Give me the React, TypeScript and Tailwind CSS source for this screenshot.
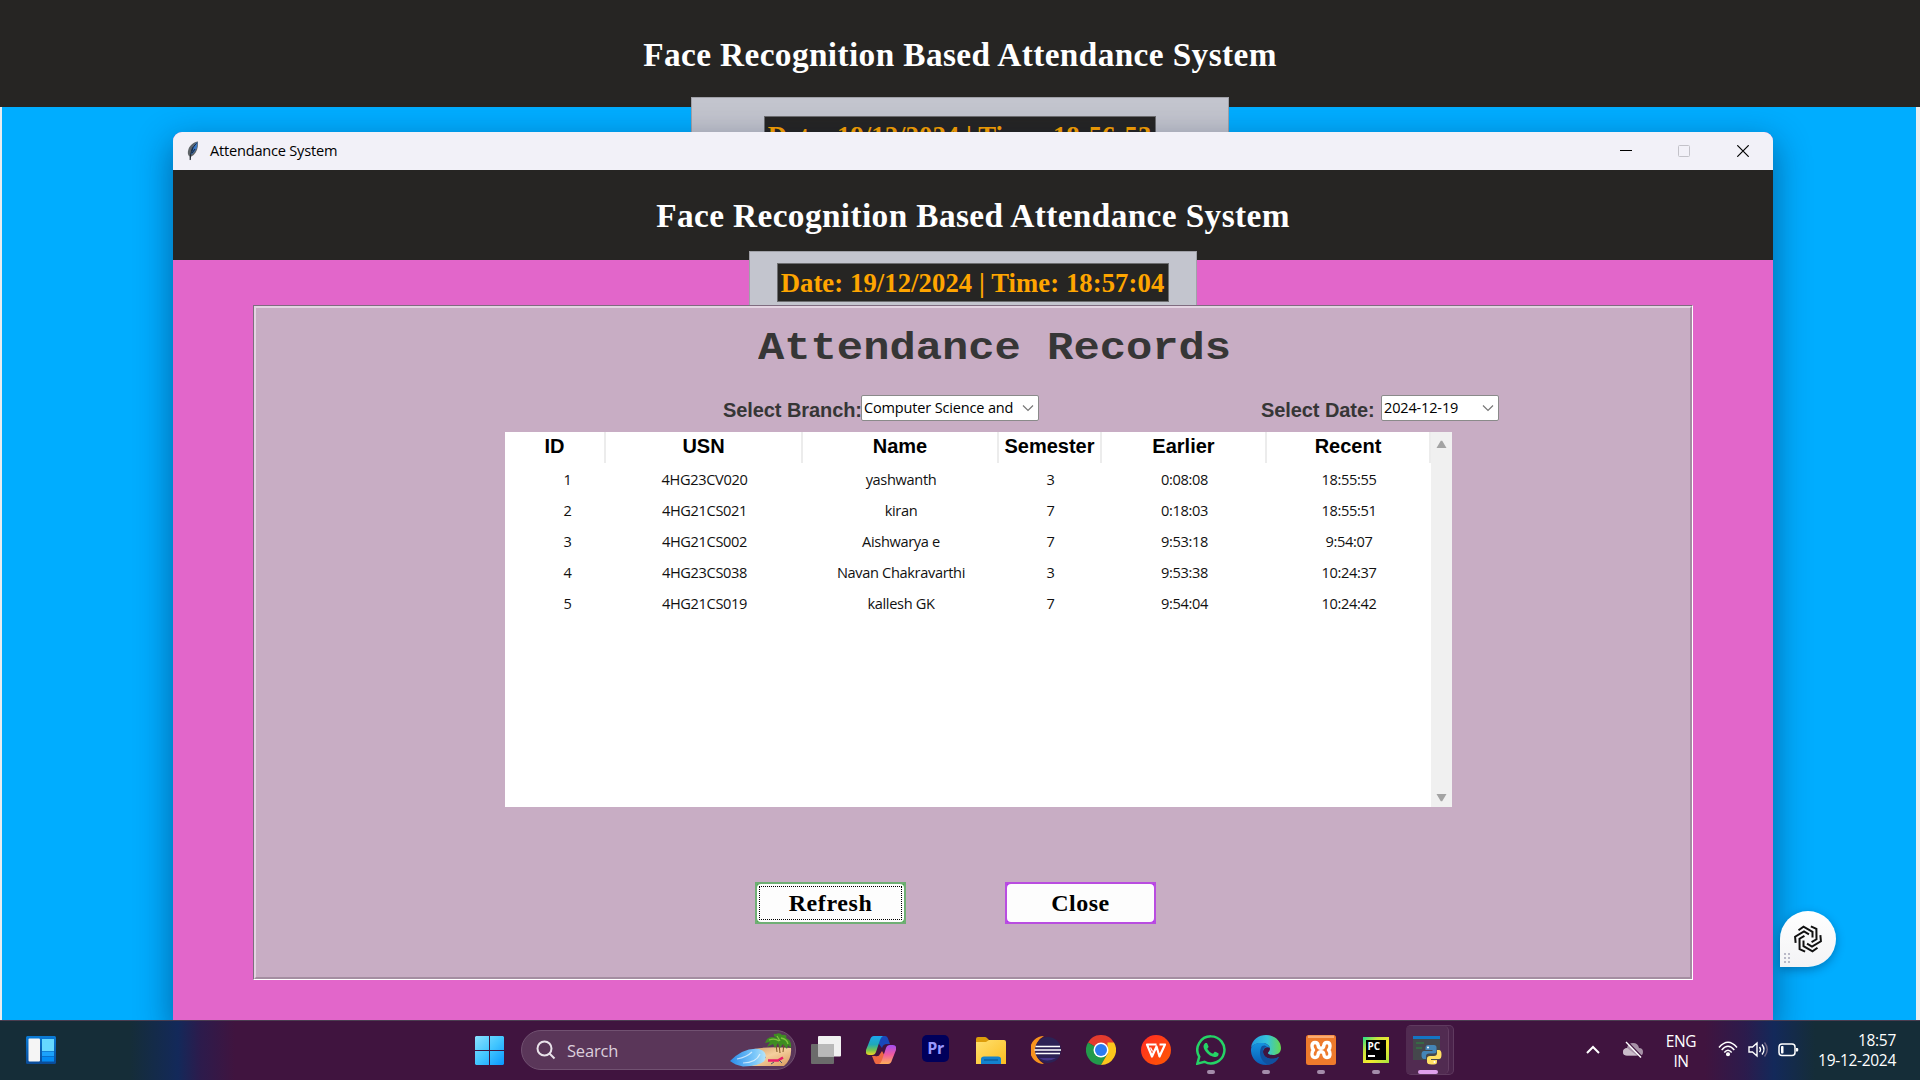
import React from "react";

const columns = [
  { label: "ID", width: "w-[101px]", cell: "pl-[24px]" },
  { label: "USN", width: "w-[197px]", cell: "" },
  { label: "Name", width: "w-[196px]", cell: "" },
  { label: "Semester", width: "w-[103px]", cell: "" },
  { label: "Earlier", width: "w-[165px]", cell: "" },
  { label: "Recent", width: "w-[164px]", cell: "" },
];

const rows = [
  ["1", "4HG23CV020", "yashwanth", "3", "0:08:08", "18:55:55"],
  ["2", "4HG21CS021", "kiran", "7", "0:18:03", "18:55:51"],
  ["3", "4HG21CS002", "Aishwarya e", "7", "9:53:18", "9:54:07"],
  ["4", "4HG23CS038", "Navan Chakravarthi", "3", "9:53:38", "10:24:37"],
  ["5", "4HG21CS019", "kallesh GK", "7", "9:54:04", "10:24:42"],
];

function Heading() {
  return (
    <h1 className="whitespace-nowrap font-['Liberation_Serif',serif] text-[33.33px] font-bold leading-[39px] tracking-[0.38px] text-white">
      Face Recognition Based Attendance System
    </h1>
  );
}

function Clock({ time }: { time: string }) {
  return (
    <div className="flex h-[39px] w-[392px] items-center justify-center whitespace-nowrap border border-[#6d6e70] bg-[#262523] pt-px font-['Liberation_Serif',serif] text-[26.67px] font-bold leading-[37px] tracking-[0.08px] text-[#ffa500]">
      Date: 19/12/2024 | Time: {time}
    </div>
  );
}

function Combo({ text, width }: { text: string; width: string }) {
  return (
    <div className={`flex h-[26px] items-center justify-between rounded-[2px] border border-[#8a8a8a] bg-white pl-[2px] pr-[4px] font-['Open_Sans',sans-serif] text-[14.5px] font-normal tracking-[-0.15px] text-black ${width}`}>
      <span className="whitespace-nowrap leading-[24px]">{text}</span>
      <svg width="12" height="8" viewBox="0 0 12 8" fill="none" stroke="#777" strokeWidth="1.2">
        <path d="M1 1.5l5 5 5-5" />
      </svg>
    </div>
  );
}

function TitleBar() {
  return (
    <div className="flex h-[38px] items-center rounded-t-[9px] bg-[#f2f1f8] pl-[14px]">
      <svg width="12" height="20" viewBox="0 0 12 20">
        <path d="M11 .5C7 1 3 4 1.500 8 .3 11.500.7 14 2.500 15.500L3 19.500l1-3.700c4-2 6.200-6 6.800-10z" fill="#5f6468" />
        <path d="M10.500 1C7 3 4 7 3.500 14c3.500-2 6-5 6.500-8.500z" fill="#3a78c8" />
        <path d="M9.500 2.500C6 5.500 3.500 10 3.200 19" fill="none" stroke="#18222c" strokeWidth="1" />
        <path d="M5.800 6.500l-1 3.500M8 8l-3 4" stroke="#172b45" strokeWidth="1.200" />
      </svg>
      <span className="ml-[11px] flex-1 pb-[2px] font-['Open_Sans',sans-serif] text-[14.6px] leading-[36px] tracking-[-0.22px] text-black">Attendance System</span>
      <svg className="mr-[46px]" width="12" height="12" viewBox="0 0 12 12"><path d="M0 5.500h12" stroke="#000" /></svg>
      <svg className="mr-[47px]" width="12" height="12" viewBox="0 0 12 12"><rect x=".5" y=".5" width="11" height="11" rx="1" fill="none" stroke="#c3c2c9" /></svg>
      <svg className="mr-[24px]" width="12" height="12" viewBox="0 0 12 12"><path d="M.3.3l11.400 11.400M11.700.3L.3 11.700" stroke="#000" strokeWidth="1.200" /></svg>
    </div>
  );
}

function RecordsTable() {
  return (
    <div className="ml-[249px] flex h-[375px] w-[947px] bg-white">
      <div className="w-[926px]">
        <div className="flex h-[31px]">
          {columns.map((c) => (
            <div key={c.label} className={`flex justify-center border-r-2 border-[#ececec] font-['Liberation_Sans',sans-serif] text-[20px] font-bold leading-[29px] text-black ${c.width}`}>
              {c.label}
            </div>
          ))}
        </div>
        {rows.map((r) => (
          <div key={r[0]} className="flex h-[31.2px] items-center">
            {r.map((v, i) => (
              <div key={i} className={`whitespace-nowrap text-center font-['Open_Sans',sans-serif] text-[14.6px] leading-[30px] tracking-[-0.35px] text-[#111] ${columns[i].width} ${columns[i].cell}`}>
                {v}
              </div>
            ))}
          </div>
        ))}
      </div>
      <div className="flex w-[21px] flex-col items-center justify-between bg-[#f0f0f0] pb-[5px] pt-[8px]">
        <svg width="11" height="9" viewBox="0 0 11 9"><path d="M4.800.8h1.400L10.500 8H.5z" fill="#a3a3a3" /></svg>
        <svg width="11" height="9" viewBox="0 0 11 9"><path d="M.5 1h10L6.200 8.200H4.800z" fill="#a3a3a3" /></svg>
      </div>
    </div>
  );
}

function AttendanceWindow() {
  return (
    <div className="absolute left-[173px] top-[132px] h-[888px] w-[1600px] rounded-t-[9px] bg-[#e266ca] shadow-[0_12px_34px_3px_rgba(0,20,60,0.42)]">
      <TitleBar />
      <div className="flex h-[90px] justify-center bg-[#262523] pt-[26px]">
        <Heading />
      </div>
      <div className="relative mx-auto -mt-[9px] flex h-[54px] w-[448px] justify-center border border-b-0 border-[#a0a1a8] bg-[#c3c5ce] pr-px pt-[11px]">
        <Clock time="18:57:04" />
      </div>
      <div className="ml-[80px] h-[675px] w-[1440px] border border-b-white border-l-[#7f6c80] border-r-white border-t-[#7f6c80]">
        <div className="h-full border-2 border-b-[#a48da1] border-l-[#e4d4e2] border-r-[#a48da1] border-t-[#e4d4e2] bg-[#c8adc4]">
          <h2 className="h-[87px] whitespace-nowrap pl-[502px] pt-[16px] font-['Liberation_Mono',monospace] text-[43.8px] font-bold leading-[48px] text-[#363636]">
            <span className="inline-block origin-[50%_78%] scale-y-[0.88]">Attendance Records</span>
          </h2>
          <div className="flex h-[37px] font-['Liberation_Sans',sans-serif] text-[20px] font-bold leading-[30px] tracking-[-0.08px] text-[#363636]">
            <span className="w-[138px] whitespace-nowrap ml-[467px]">Select Branch:</span>
            <Combo text="Computer Science and" width="w-[178px]" />
            <span className="ml-[222px] w-[120px] whitespace-nowrap">Select Date:</span>
            <Combo text="2024-12-19" width="w-[118px]" />
          </div>
          <RecordsTable />
          <div className="ml-[499px] mt-[75px] flex gap-[99px] font-['Liberation_Serif',serif] text-[24px] font-bold text-black">
            <button className="h-[42px] w-[151px] border-2 border-[#6fae74] bg-[#4caf50]">
              <span className="flex h-full items-center justify-center rounded-[4px] bg-[#fdfdfd] p-[2px]">
                <span className="h-full w-full border border-dotted border-black leading-[33px] tracking-[0.6px]">Refresh</span>
              </span>
            </button>
            <button className="h-[42px] w-[151px] border-2 border-[#b94de0] bg-[#b526f5]">
              <span className="flex h-full items-center justify-center rounded-[4px] bg-[#fdfdfd] leading-[36px] tracking-[0.5px]">Close</span>
            </button>
          </div>
        </div>
      </div>
    </div>
  );
}

function AssistantBubble() {
  return (
    <div className="absolute left-[1780px] top-[911px] flex size-[56px] items-center justify-center rounded-full rounded-bl-[3px] bg-gradient-to-b from-white to-[#f3f3f5] shadow-[0_3px_10px_rgba(0,30,70,0.35)]">
      <svg width="30" height="30" viewBox="-15 -15 30 30" fill="none" stroke="#111" strokeWidth="2">
        {[0, 60, 120, 180, 240, 300].map((a) => (
          <path key={a} transform={`rotate(${a})`} d="M-9.500-8.800L-4.500-12.300 4.500-7.200V-1.500" />
        ))}
      </svg>
      <div className="absolute bottom-[4px] left-[4px] grid grid-cols-2 gap-[2px]">
        {[0, 1, 2, 3, 4, 5].map((i) => (
          <i key={i} className="size-[2px] bg-[#b9b9c8]" />
        ))}
      </div>
    </div>
  );
}

function Widgets() {
  return (
    <svg width="30" height="28" viewBox="0 0 30 28">
      <defs><linearGradient id="wg" x2="0" y2="1"><stop stopColor="#0a7bd6" /><stop offset="1" stopColor="#0a4b98" /></linearGradient></defs>
      <rect width="30" height="28" rx="1.500" fill="url(#wg)" />
      <rect x="2.500" y="2.500" width="11.500" height="23" rx="1" fill="#f5f5f5" />
      <rect x="16" y="3" width="12" height="12" fill="#66d8ff" />
      <rect x="16" y="15.500" width="12" height="4.500" fill="#1ca2fb" />
      <rect x="16" y="20.500" width="12" height="5" fill="#048bf2" />
    </svg>
  );
}

function Start() {
  return (
    <svg width="29" height="29" viewBox="0 0 29 29">
      <defs><linearGradient id="st" gradientUnits="userSpaceOnUse" x2="29" y2="29"><stop stopColor="#8be0ff" /><stop offset=".5" stopColor="#42c6ff" /><stop offset="1" stopColor="#0a96ff" /></linearGradient></defs>
      <path d="M1 0h13v14H0V1zM15 0h13l1 1v13H15zM0 15h14v14H1l-1-1zM15 15h14v13l-1 1H15z" fill="url(#st)" />
    </svg>
  );
}

function Beach() {
  return (
    <svg width="62" height="34" viewBox="0 0 62 34">
      <defs>
        <linearGradient id="sea" x2="1"><stop stopColor="#2b8de8" /><stop offset=".7" stopColor="#7cc8fa" /><stop offset="1" stopColor="#b7e5f6" /></linearGradient>
        <linearGradient id="sand" x2="1" y2="1"><stop stopColor="#c99463" /><stop offset=".5" stopColor="#f5cf9d" /><stop offset="1" stopColor="#d89a5c" /></linearGradient>
      </defs>
      <path d="M24 16Q40 13 61 15 62 26 54 33H12Q32 33 36 24z" fill="url(#sand)" />
      <path d="M0 28Q14 14 29 16 38 19 35 27 31 33 13 33.500 5 32 0 28z" fill="url(#sea)" />
      <path d="M7 26q10-2 15-7M13 30q13 0 17-9" fill="none" stroke="#fff" strokeOpacity=".65" strokeWidth="1.200" />
      <path d="M47 19l-1-8M50 20l-1-9M53 19l1-9" fill="none" stroke="#7b5522" strokeWidth="1" />
      <path d="M48 6Q42 2 37 6L35 10 40 9 37 14 43 11 45 15 48 10 50 15 53 11 57 16 58 12 61 15Q62 7 56 5 58 1 52 2 50-1 46 1 43 0 44 3z" fill="#3f8d22" />
      <path d="M39 7q6-2 10 1M51 5q6 1 7 6M47 3l3 5" fill="none" stroke="#7fc43d" strokeWidth="1.300" />
      <path d="M38 27.500h10l5-3" fill="none" stroke="#e91e67" strokeWidth="2.600" />
      <path d="M41 31l3-2M52 30l-3-3" stroke="#4d586b" strokeWidth="1" />
    </svg>
  );
}

function TaskView() {
  return (
    <svg width="30" height="28" viewBox="0 0 30 28">
      <rect y="8" width="23" height="20" rx="1" fill="#6b6b6b" />
      <rect x="7" width="23" height="20.500" rx="1" fill="#f1f1f1" />
      <rect x="7" y="8" width="16" height="12.500" fill="#b9b9b9" />
    </svg>
  );
}

function Copilot() {
  return (
    <svg width="30" height="28" viewBox="0 0 30 28">
      <defs>
        <linearGradient id="ca" x2="0" y2="1"><stop stopColor="#1ba7ef" /><stop offset=".45" stopColor="#20a9b8" /><stop offset=".75" stopColor="#77c44c" /><stop offset="1" stopColor="#f4d523" /></linearGradient>
        <linearGradient id="cb" x2="0" y2="1"><stop stopColor="#a34df2" /><stop offset=".5" stopColor="#f05aa0" /><stop offset="1" stopColor="#ffaf58" /></linearGradient>
      </defs>
      <path d="M13 0h6q2.500 0 3.500 4l1.500 4h-3q-4 0-5 4L13 8z" fill="#1948ba" />
      <path d="M8 0h9q-2 1-3 4L10 16q-1 3-4 3H3q-4 0-3-5L4 4q1-4 4-4z" fill="url(#ca)" />
      <path d="M10 28h7l3-6-4-7-2 3q-1 3-5 2H6l2 5q1 3 2 3z" fill="#ed6842" />
      <path d="M22 28h-9q2-1 3-4l4-12q1-3 4-3h3q4 0 3 5l-4 10q-1 4-4 4z" fill="url(#cb)" />
    </svg>
  );
}

function Premiere() {
  return (
    <div className="-mt-[3px] flex size-[27px] items-center justify-center rounded-[5px] bg-[#00005b] font-['Open_Sans',sans-serif] text-[16px] font-bold leading-[24px] tracking-[-0.5px] text-[#9999ff]">
      <span className="-mt-[2px]">Pr</span>
    </div>
  );
}

function Folder() {
  return (
    <svg width="30" height="27" viewBox="0 0 30 27">
      <defs><linearGradient id="fo" x2="1" y2="1"><stop stopColor="#ffe06f" /><stop offset="1" stopColor="#fbbd20" /></linearGradient></defs>
      <path d="M0 2q0-2 2-2h7q1 0 2 1l2 2h15v5H0z" fill="#dd9d0b" />
      <path d="M0 5h10l3-2h15q2 0 2 2v22H0z" fill="url(#fo)" />
      <path d="M5 27v-5q0-2.500 3-2.500h14q3 0 3 2.500v5z" fill="#1382cf" />
      <path d="M8 23h14" stroke="#0a4c87" strokeWidth="1" />
    </svg>
  );
}

function Eclipse() {
  return (
    <svg width="30" height="28" viewBox="0 0 30 28">
      <path d="M13 0A14 14 0 0 0 13 28 16 16 0 0 1 13 0z" fill="#f7941e" />
      <circle cx="17" cy="14" r="13" fill="#2c2255" />
      <path d="M8 22q8 5 17 0z" fill="#46378b" />
      <path d="M4.500 10.500h24.500M3.500 14h26.500M4.500 17.500h24.500" stroke="#fff" strokeWidth="1.700" />
    </svg>
  );
}

function Chrome() {
  return (
    <svg width="30" height="30" viewBox="0 0 30 30">
      <path d="M15 15L2 7.500A15 15 0 0 1 28 7.500z" fill="#e33b2e" />
      <path d="M2 7.500A15 15 0 0 0 15 30L21.500 18.700 15 15z" fill="#229a4b" />
      <path d="M28 7.500A15 15 0 0 1 15 30L21.500 18.700V7.500z" fill="#fcc61c" />
      <circle cx="15" cy="15" r="7.500" fill="#fff" />
      <circle cx="15" cy="15" r="6" fill="#2b7bf1" />
    </svg>
  );
}

function Wps() {
  return (
    <svg width="30" height="30" viewBox="0 0 30 30">
      <defs><linearGradient id="wp" x2="1" y2="1"><stop stopColor="#ff2a25" /><stop offset="1" stopColor="#ff5a00" /></linearGradient></defs>
      <circle cx="15" cy="15" r="15" fill="url(#wp)" />
      <path d="M15.500 9.500H6L11 21.500l4.500-10 3 10L24 9.500h-5.500" fill="none" stroke="#fff" strokeWidth="2.200" strokeLinejoin="round" />
      <path d="M9.500 12.500l2 4" stroke="#fff" strokeWidth="1.200" />
    </svg>
  );
}

function WhatsApp() {
  return (
    <svg width="30" height="30" viewBox="0 0 24 24" fill="#25d366">
      <path d="M17.472 14.382c-.297-.149-1.758-.867-2.030-.967-.273-.099-.471-.148-.670.150-.197.297-.767.966-.940 1.164-.173.199-.347.223-.644.075-.297-.150-1.255-.463-2.390-1.475-.883-.788-1.480-1.761-1.653-2.059-.173-.297-.018-.458.130-.606.134-.133.298-.347.446-.520.149-.174.198-.298.298-.497.099-.198.050-.371-.025-.520-.075-.149-.669-1.612-.916-2.207-.242-.579-.487-.500-.669-.510-.173-.008-.371-.010-.570-.010-.198 0-.520.074-.792.372-.272.297-1.040 1.016-1.040 2.479 0 1.462 1.065 2.875 1.213 3.074.149.198 2.096 3.200 5.077 4.487.709.306 1.262.489 1.694.625.712.227 1.360.195 1.871.118.571-.085 1.758-.719 2.006-1.413.248-.694.248-1.289.173-1.413-.074-.124-.272-.198-.570-.347" />
      <path d="M12 1.100A10.800 10.800 0 0 0 2.600 17.400L1.100 22.900l5.700-1.500A10.800 10.800 0 1 0 12 1.100z" fill="none" stroke="#25d366" strokeWidth="2" />
    </svg>
  );
}

function Edge() {
  return (
    <svg width="30" height="30" viewBox="0 0 30 30">
      <defs>
        <linearGradient id="ea" x2="1"><stop stopColor="#239be0" /><stop offset=".55" stopColor="#36c4db" /><stop offset="1" stopColor="#66d94f" /></linearGradient>
        <linearGradient id="eb" x2="0" y2="1"><stop stopColor="#1594df" /><stop offset="1" stopColor="#0a5bb5" /></linearGradient>
      </defs>
      <path d="M0 13C1 4 8 0 15 0c9 0 15 6 15 13 0 5-4 7-8 7-3 0-5-1-5-2s2-2 2-4c0-3-3-6-8-6C6 8 1 10 0 13z" fill="url(#ea)" />
      <path d="M0 14C1 9 6 7.500 11 8c4 0 7 2 8 5-3-2-7 0-7 4 0 6 8 9 16 5-3 5-8 8-13 8C6 30-.5 23 0 14z" fill="url(#eb)" />
      <path d="M11 11c-4 6-2 15 6 18.800C22 29.500 26 26 28 22c-8 4-15 1-16-5-.2-3 1-5 4-5-1-1.500-3-2-5-1z" fill="#10509f" />
    </svg>
  );
}

function Xampp() {
  return (
    <svg width="30" height="30" viewBox="0 0 30 30">
      <rect width="30" height="30" rx="2.500" fill="#ee7a2c" />
      <path d="M2 .5h26v2.500H2z" fill="#fbab72" />
      <path d="M7.500 15Q6 13.500 6 11q0-3.500 3-3.500t3.200 3.500q.3 2.200 2.800 2.200t2.800-2.200q.2-3.500 3.200-3.500t3 3.500q0 2.500-1.500 4 1.500 1.500 1.500 4 0 3.500-3 3.500t-3.200-3.500q-.3-2.200-2.800-2.200t-2.800 2.200q-.2 3.500-3.200 3.500T6 19q0-2.500 1.500-4z" fill="none" stroke="#fff" strokeWidth="3.400" strokeLinejoin="round" />
    </svg>
  );
}

function PyCharm() {
  return (
    <div className="flex size-[26px] items-center justify-center bg-[linear-gradient(135deg,#21e08c_0%,#c9e53c_30%,#f5e92e_60%,#a5e640_100%)]">
      <div className="flex h-[20px] w-[20px] flex-col items-start bg-black pl-[2px] font-['Open_Sans',sans-serif] text-[10px] font-bold leading-[12px] text-white">
        PC
        <i className="mt-[3px] h-[1.5px] w-[7px] bg-white" />
      </div>
    </div>
  );
}

function PythonWindow() {
  return (
    <svg className="ml-[1px]" width="30" height="30" viewBox="0 0 30 30">
      <rect x="0" y="1" width="27" height="24" fill="#45474c" />
      <rect x="0" y="1" width="27" height="3" fill="#1475c5" />
      <path d="M3 8h8M3 13h6" stroke="#2b8c3e" strokeWidth="1.200" />
      <path d="M18.500 10h-3.500q-2.500 0-2.500 3v2h7v1H11q-2.500 0-2.500 4t2.500 4h2v-3q0-2.500 3-2.500h5q2.500 0 2.500-2.500v-3.500q0-2.500-2.500-2.500z" fill="#4485b7" />
      <path d="M18.500 29.500h2.500q3 0 3-2.500v-2h-6v-1h8q2.500 0 2.500-4.500T26 15h-2v3q0 3-3 3h-4q-3 0-3 2.500V27q0 2.500 4.500 2.500z" fill="#ffe064" />
      <circle cx="15" cy="12.500" r="1" fill="#fff" /><circle cx="21.500" cy="27" r="1" fill="#fff" />
    </svg>
  );
}

const apps = [
  { id: "view", icon: <TaskView />, open: false },
  { id: "copilot", icon: <Copilot />, open: false },
  { id: "premiere", icon: <Premiere />, open: false },
  { id: "files", icon: <Folder />, open: false },
  { id: "eclipse", icon: <Eclipse />, open: false },
  { id: "chrome", icon: <Chrome />, open: false },
  { id: "wps", icon: <Wps />, open: false },
  { id: "whatsapp", icon: <WhatsApp />, open: true },
  { id: "edge", icon: <Edge />, open: true },
  { id: "xampp", icon: <Xampp />, open: true },
  { id: "pycharm", icon: <PyCharm />, open: true },
];

function Taskbar() {
  return (
    <div className="relative flex h-[60px] w-[1920px] items-start border-t border-[#4a3d50] bg-[linear-gradient(90deg,#152d38_0px,#152d38_130px,#13295a_178px,#2c1b4c_200px,#40143f_235px,#40143f_1705px,#2c1b4c_1745px,#13295a_1774px,#152d38_1815px,#152d38_1920px)] font-['Open_Sans',sans-serif] text-white">
      <div className="ml-[26px] mt-[15px]"><Widgets /></div>
      <div className="ml-[419px] mt-[15px]"><Start /></div>
      <div className="ml-[17px] mt-[9px] flex h-[40px] w-[275px] items-center rounded-full border border-[#715171] bg-[#5a3659] pl-[14px] pr-[3px]">
        <svg width="20" height="20" viewBox="0 0 20 20" fill="none" stroke="#e9e2ea" strokeWidth="2"><circle cx="8.500" cy="8.500" r="7" /><path d="M13.500 13.500l5 5" /></svg>
        <span className="ml-[11px] flex-1 pt-[2px] text-[16.500px] leading-[38px] tracking-[-0.2px] text-[#dccfdc]">Search</span>
        <Beach />
      </div>
      <div className="ml-[2px] flex">
        {apps.map((a) => (
          <div key={a.id} className="flex w-[55px] flex-col items-center">
            <div className="flex h-[58px] items-center">{a.icon}</div>
            {a.open && <i className="-mt-[9px] h-[4px] w-[8px] rounded-full bg-[#a48cab]" />}
          </div>
        ))}
      </div>
      <div className="ml-[3px] mt-[4px] flex h-[50px] w-[48px] rounded-[5px] border border-[#5f3a5f] border-l-0 bg-[#4b234b]">
        <div className="flex h-[48px] w-[43px] flex-col items-center rounded-[5px] border-r border-[#643e63] bg-[#512b51] pt-[9px]">
          <PythonWindow />
          <i className="ml-px mt-[5px] h-[4px] w-[20px] shrink-0 rounded-full bg-[#dfa0ec]" />
        </div>
      </div>
      <svg className="ml-[132px] mt-[24px]" width="14" height="9" viewBox="0 0 14 9" fill="none" stroke="#fff" strokeWidth="2"><path d="M1 8l6-6 6 6" /></svg>
      <svg className="ml-[22px] mt-[20px]" width="22" height="18" viewBox="0 0 22 18">
        <path d="M5 14.500Q1 14.500 1 11t4-4q1-5 6-5t6 5q4 0 4 4t-4 3.500z" fill="#a792a7" />
        <path d="M5 14.500Q1 14.500 1 11t4-4l4 3 6 4.500z" fill="#cabdca" />
        <path d="M5.200.4l15 15.500" stroke="#40143f" strokeWidth="1.400" /><path d="M4 1l15 15.500" stroke="#fff" strokeWidth="1.400" />
      </svg>
      <div className="ml-[14px] mt-[10px] w-[46px] text-center text-[15.500px] leading-[20px] tracking-[-0.4px]">ENG<br />IN</div>
      <svg className="ml-[14px] mt-[20px]" width="20" height="16" viewBox="0 0 20 16" fill="none" stroke="#fff" strokeWidth="1.500">
        <path d="M1 6.500Q10-4 19 6.500M3.700 9Q10 1.500 16.300 9M6.300 11.500Q10 7 13.700 11.500" /><circle cx="10" cy="13.300" r="1.300" fill="#fff" />
      </svg>
      <svg className="ml-[10px] mt-[20px]" width="21" height="18" viewBox="0 0 21 18" fill="none" stroke="#fff" strokeWidth="1.400">
        <path d="M1 6h3.500L9 2v13l-4.500-4H1zM11.500 6q2 2.500 0 5M14 3.500q4 5 0 10" /><path d="M16.500 1.500q5.500 7 0 14" stroke="#6d6280" />
      </svg>
      <svg className="ml-[9px] mt-[22px]" width="21" height="14" viewBox="0 0 21 14">
        <rect x="1" y="1" width="16" height="11.500" rx="3" fill="none" stroke="#fff" strokeWidth="1.500" /><rect x="3" y="3" width="2.500" height="7.500" rx=".8" fill="#fff" /><path d="M18 5h1.500q.8 0 .8 1.700t-.8 1.800H18z" fill="#fff" />
      </svg>
      <div className="absolute right-[24px] top-[9px] text-right text-[15.500px] leading-[20px] tracking-[-0.3px]">18:57<br />19-12-2024</div>
    </div>
  );
}

export default function App() {
  return (
    <div className="flex h-[1080px] w-[1920px] flex-col overflow-hidden">
      <div className="relative h-[1020px] overflow-hidden bg-[#00adff]">
        <div className="flex h-[107px] justify-center bg-[#262523] pt-[35px]">
          <Heading />
        </div>
        <div className="h-[913px] border-l-2 border-r-4 border-[#e9edf0]">
          <div className="relative -top-[10px] ml-[689px] flex h-[60px] w-[538px] justify-center border border-[#a0a1a8] bg-[#c3c5ce] pr-px pt-[18px]">
            <Clock time="18:56:53" />
          </div>
        </div>
        <AttendanceWindow />
        <AssistantBubble />
      </div>
      <Taskbar />
    </div>
  );
}
